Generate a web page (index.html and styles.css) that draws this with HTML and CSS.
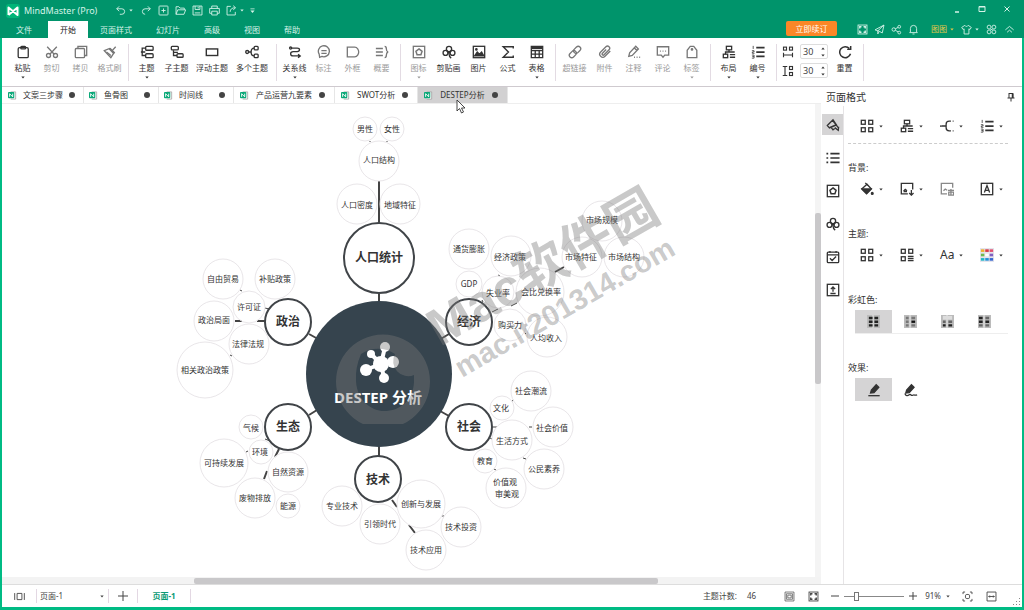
FILE: index.html
```
<!DOCTYPE html>
<html lang="zh-CN">
<head>
<meta charset="utf-8">
<title>MindMaster (Pro)</title>
<link rel="stylesheet" href="styles.css">
</head>
<body>
<svg class="sprite" aria-hidden="true">
  <symbol id="caret" viewBox="0 0 6 4"><path d="M.5 .5h5L3 3.5z" fill="currentColor"/></symbol>
  <symbol id="logo" viewBox="0 0 14 14"><rect width="14" height="14" rx="3" fill="#00b578"/><path d="M2.500 11V3.500l9 7.500V3.500L2.500 11" fill="none" stroke="#fff" stroke-width="2" stroke-linejoin="round"/></symbol>
  <symbol id="doc" viewBox="0 0 10 10"><path d="M3 1h5.500v8H3" fill="#fff" stroke="#999" stroke-width=".8"/><rect y="1" width="7" height="7" rx="1" fill="#0aa878"/><path d="M1.800 6.500V3l3.400 3.500V3" fill="none" stroke="#fff" stroke-width="1"/></symbol>
  <symbol id="undo" viewBox="0 0 16 16"><path d="M6 2L2.500 5.500 6 9M2.500 5.500h7.500a4 4 0 0 1 0 8H7"/></symbol>
  <symbol id="redo" viewBox="0 0 16 16"><path d="M10 2l3.500 3.500L10 9M13.500 5.500H6a4 4 0 0 0 0 8"/></symbol>
  <symbol id="new" viewBox="0 0 16 16"><rect x="1.500" y="1.500" width="13" height="13" rx="1"/><path d="M8 5v6M5 8h6"/></symbol>
  <symbol id="open" viewBox="0 0 16 16"><path d="M1.500 13.500v-11h4l2 2h6v2.500M1.500 13.500L4 7h11.500l-2.500 6.500z"/></symbol>
  <symbol id="save" viewBox="0 0 16 16"><path d="M1.500 1.500h13v13h-13zM4.500 1.500v5h7v-5M9 3v2M4 11.500h8"/></symbol>
  <symbol id="print" viewBox="0 0 16 16"><path d="M4 5V1.500h8V5M4 12H1V5h14v7h-3M4 9h8v5.500H4z"/></symbol>
  <symbol id="export" viewBox="0 0 16 16"><path d="M7 2H1.500v12.500h12V10M6 10c0-4 3-6 7-6M10.500 1l3.500 3-3.500 3"/></symbol>
  <symbol id="more" viewBox="0 0 6 7"><path d="M.5 .5h5v1h-5zM.5 3h5L3 6z" fill="currentColor"/></symbol>
  <symbol id="min" viewBox="0 0 10 10"><path d="M3 8h4" stroke-width="1.500"/></symbol>
  <symbol id="max" viewBox="0 0 10 10"><path d="M2 2.500h6v5H2zM2 3h6"/></symbol>
  <symbol id="close" viewBox="0 0 10 10"><path d="M2.500 2.500l5 5M7.500 2.500l-5 5"/></symbol>
  <symbol id="grid4" viewBox="0 0 16 16"><rect x="1.500" y="1.500" width="13" height="13"/><path d="M4 6.500V4h2.500M9.500 4H12v2.500M4 9.500V12h2.500M9.500 12H12V9.500" stroke-width="2"/></symbol>
  <symbol id="plane" viewBox="0 0 16 16"><path d="M1.500 8.500L14.500 1.500 12 13 7.500 10.500zM14.500 1.500L5.500 10v4.500L7.500 11"/></symbol>
  <symbol id="share" viewBox="0 0 16 16"><circle cx="4" cy="8" r="2.500"/><circle cx="12" cy="4" r="2"/><circle cx="12" cy="12.500" r="2"/><path d="M6.200 7l4-2M6.200 9l4 2.500"/></symbol>
  <symbol id="bell" viewBox="0 0 16 16"><path d="M2 12.500h12M3.500 12V6.500a4.500 4.500 0 0 1 9 0V12M6.500 14.500h3"/></symbol>
  <symbol id="shirt" viewBox="0 0 16 16"><path d="M5.500 2L1 5l2 3 1.500-1v7.500h7V7L13 8l2-3-4.500-3c-1 2-4 2-5 0z"/></symbol>
  <symbol id="clover4" viewBox="0 0 16 16"><circle cx="4.500" cy="4.500" r="2.800"/><circle cx="11.500" cy="4.500" r="2.800"/><circle cx="4.500" cy="11.500" r="2.800"/><circle cx="11.500" cy="11.500" r="2.800"/><path d="M6.500 8h3"/></symbol>
  <symbol id="up" viewBox="0 0 16 16"><path d="M2 8.500l6-5 6 5M4.500 12L8 9l3.500 3"/></symbol>

  <symbol id="paste" viewBox="0 0 16 16"><rect x="2.500" y="3" width="11.500" height="11.500" rx="1.500"/><rect x="5.500" y="1.500" width="5.500" height="3" rx="1"/></symbol>
  <symbol id="cut" viewBox="0 0 16 16"><circle cx="4" cy="12" r="2.300"/><circle cx="12" cy="12" r="2.300"/><path d="M2.500 2l8 8.500M13.500 2l-8 8.500"/></symbol>
  <symbol id="copy" viewBox="0 0 16 16"><rect x="1.500" y="4" width="10.500" height="10.500" rx="1"/><path d="M4.500 4V1.500h10v10.500H12"/></symbol>
  <symbol id="brush" viewBox="0 0 16 16"><path d="M1.500 6.500L7.500 4l5 5L9 14.500z"/><path d="M4 8l5 4M10.500 6.500L14.500 2"/><path d="M7.500 4l5.500 5.500" stroke-width="2.800"/></symbol>
  <symbol id="topic" viewBox="0 0 16 16"><rect x="6.500" y="1.500" width="8.500" height="4.500" rx="1"/><rect x="6.500" y="10" width="8.500" height="4.500" rx="1"/><path d="M6.500 3.500H2.500v8.500h4M1 8h5"/></symbol>
  <symbol id="subtopic" viewBox="0 0 16 16"><rect x="1.500" y="1.500" width="8" height="4" rx="1"/><rect x="8" y="10" width="7" height="4" rx="1"/><path d="M4 6v6h4M4 8.500h5"/></symbol>
  <symbol id="floating" viewBox="0 0 16 16"><rect x="1.500" y="4.500" width="13" height="7.500" stroke-width="1.600"/></symbol>
  <symbol id="multi" viewBox="0 0 16 16"><rect x="10.500" y="1.500" width="4.500" height="4" rx="1"/><rect x="10.500" y="10.500" width="4.500" height="4" rx="1"/><circle cx="2.500" cy="8" r="1.700"/><path d="M4 8h3M10.500 3.500C8 3.500 7 5 7 8s1 4.500 3.500 4.500"/></symbol>
  <symbol id="relation" viewBox="0 0 16 16"><path d="M4 3.500h6.500c3.500 0 3.500 4 0 4H6c-4 0-4 5 0 5h7M11.500 10.500l2.500 2-2.500 2"/><circle cx="3" cy="3.500" r="1.200"/></symbol>
  <symbol id="callout" viewBox="0 0 16 16"><path d="M3 14l-.5-3.500a6.300 6.300 0 1 1 3 2.500zM5 6.500h6M5 9.500h6"/></symbol>
  <symbol id="frame" viewBox="0 0 16 16"><path d="M1.500 2.500h8.500c3 0 4.500 3.500 4.500 5.500s-1.500 5.500-4.500 5.500H1.500z"/></symbol>
  <symbol id="summary" viewBox="0 0 16 16"><path d="M1 4h8M1 8h8M1 12h8M11 1.500c2 0 2 1 2 3s0 3 2 3.500c-2 .5-2 1.500-2 3.500s0 3-2 3"/></symbol>
  <symbol id="mark" viewBox="0 0 16 16"><rect x="1.500" y="1.500" width="13" height="13"/><path d="M8 4.500l3.500 2.700-1.300 4H5.800l-1.300-4z" stroke-width="1.700"/></symbol>
  <symbol id="clip" viewBox="0 0 16 16"><circle cx="8" cy="4.500" r="3"/><circle cx="4" cy="9" r="2.800"/><circle cx="12" cy="9" r="2.800"/><path d="M8 7v3c0 2 1 4 2.500 5M6 7l2 2.500L10 7"/></symbol>
  <symbol id="image" viewBox="0 0 16 16"><rect x="1.500" y="1.500" width="13" height="13"/><path d="M3 12.500L6 8l2.500 2.500L11 8l2.500 4.500z" fill="currentColor"/><circle cx="5" cy="5" r=".8"/></symbol>
  <symbol id="sigma" viewBox="0 0 16 16"><path d="M14 4V2H2.500l6 6-6 6H14v-2" stroke-width="1.600"/></symbol>
  <symbol id="table" viewBox="0 0 16 16"><path d="M1.500 1.500h13v13h-13zM1.500 6.500h13M1.500 10.500h13M6 6v8.500M10.500 6v8.500"/><path d="M2 3.500h12" stroke-width="2.500"/></symbol>
  <symbol id="link" viewBox="0 0 16 16"><g transform="rotate(-45 8 8)"><rect x="0" y="5.200" width="9" height="5.600" rx="2.800"/><rect x="7" y="5.200" width="9" height="5.600" rx="2.800"/></g></symbol>
  <symbol id="attach" viewBox="0 0 16 16"><g transform="rotate(45 8 8)"><path d="M11.500 3v8.500a3.500 3.500 0 0 1-7 0V3a2.500 2.500 0 0 1 5 0v8a1.300 1.300 0 0 1-2.600 0V5"/></g></symbol>
  <symbol id="note" viewBox="0 0 16 16"><path d="M2 13l1-4 7-7.500 3 3L6 12zM8.500 3.500l3 3M8 14h1M11 14h1M14 14h1"/></symbol>
  <symbol id="comment" viewBox="0 0 16 16"><path d="M1.500 2h13v9.500H10L8 14l-2-2.500H1.500zM4.500 7h1M7.500 7h1M10.500 7h1"/></symbol>
  <symbol id="tag" viewBox="0 0 16 16"><path d="M2.500 14.500V6L6 1.500h4L13.500 6v8.500z"/><circle cx="8" cy="5" r=".8"/></symbol>
  <symbol id="layout" viewBox="0 0 16 16"><rect x="5" y="1.500" width="6" height="4"/><rect x="1.500" y="10.500" width="5" height="4"/><path d="M8 5.500V8M4 10.500V8h10.500M9 11h6M9 14h6"/></symbol>
  <symbol id="number" viewBox="0 0 16 16"><path d="M6 3h9.500M6 8h9.500M6 13h9.500" stroke-width="2"/><path d="M2.500 1v3.500M1 6.500h2.500v1.500H1.500v1.500h2.500M1 11.500h2.500v3.500H1M1.500 13.200h2" stroke-width=".9"/></symbol>
  <symbol id="hgap" viewBox="0 0 16 16"><rect x="2" y="1.500" width="4" height="4"/><rect x="10" y="1.500" width="4" height="4"/><path d="M2 9v6M14 9v6M2 12h12"/></symbol>
  <symbol id="vgap" viewBox="0 0 16 16"><rect x="10" y="2" width="4" height="4"/><rect x="10" y="10" width="4" height="4"/><path d="M1 2h6M1 14h6M4 2v12"/></symbol>
  <symbol id="reset" viewBox="0 0 16 16"><path d="M13 4a6.300 6.300 0 1 0 1.300 6M14.500 1v4h-4" stroke-width="1.700"/></symbol>

  <symbol id="pin" viewBox="0 0 10 10"><path d="M3 1v5M3 1.500h4v4.500M1.500 6h7M5 6v3.500" stroke-width="1"/><path d="M6.500 1v5" stroke-width="1.500"/></symbol>
  <symbol id="style" viewBox="0 0 16 16"><path d="M1.500 8.500L8 2l4 6-8 3.500zM4 11l8-3.500M7 2l7 9M10 11l4 3 .5-4"/><path d="M6 11l2 2.500L10 12"/></symbol>
  <symbol id="list" viewBox="0 0 16 16"><path d="M5 3h10.500M5 8h10.500M5 13h10.500M.5 3h2M.5 8h2M.5 13h2" stroke-width="1.900"/></symbol>
  <symbol id="task" viewBox="0 0 16 16"><rect x="1.500" y="2.500" width="13" height="12" rx="1"/><path d="M1.500 5.500h13M4.500 1v2M11.500 1v2M4.500 9.500l2.500 2.500 4.500-4.500"/></symbol>
  <symbol id="upload" viewBox="0 0 16 16"><rect x="1.500" y="1.500" width="13" height="13"/><path d="M8 10V5M5.500 7L8 4.500 10.500 7M5 12h6" stroke-width="1.500"/></symbol>
  <symbol id="four" viewBox="0 0 16 16"><rect x="1.500" y="1.500" width="4.500" height="4.500"/><rect x="10" y="1.500" width="4.500" height="4.500"/><rect x="1.500" y="10" width="4.500" height="4.500"/><rect x="10" y="10" width="4.500" height="4.500"/></symbol>
  <symbol id="fourlist" viewBox="0 0 16 16"><rect x="1.500" y="1.500" width="4.500" height="4.500"/><rect x="10" y="1.500" width="4.500" height="4.500"/><rect x="1.500" y="10" width="4.500" height="4.500"/><path d="M9 9.500h6.500M9 12h6.500M9 14.500h6.500"/></symbol>
  <symbol id="branch" viewBox="0 0 16 16"><path d="M2 8h5M12.500 2.500h-2C8 2.500 7 3.500 7 6v4c0 2.500 1 3.500 3.500 3.500h2M1 7v2M14.500 13.500h1M14.500 2.500h1"/></symbol>
  <symbol id="bucket" viewBox="0 0 16 16"><path d="M2 8l6-5.500L13 8l-5.500 5.500zM6 1l3 3"/><path d="M2.500 8h10L7.500 13z" fill="currentColor"/><circle cx="14" cy="13" r="1" fill="currentColor"/></symbol>
  <symbol id="bgimg" viewBox="0 0 16 16"><path d="M9 13.500H1.500v-12h13v7M4 10.500l2-2 2 1.500M4 11h4M13 9v6M10.500 12.500l2.500 2.500 2.500-2.500"/></symbol>
  <symbol id="bgdel" viewBox="0 0 16 16"><path d="M8 13.500H1.500v-12h13v5M4 10l2-2 2 1.500M9 9.500h7M10 11.500h5.500v3.500H10zM12.500 8v7"/></symbol>
  <symbol id="wmark" viewBox="0 0 16 16"><rect x="1.500" y="1.500" width="13" height="13"/><path d="M5 12l3-8 3 8M6 9.500h4"/></symbol>
  <symbol id="swatches" viewBox="0 0 16 16"><path d="M0 0h16v16H0z" fill="#e4e4ec" stroke="none"/><g stroke="none"><path d="M1 1.500h4v3H1z" fill="#f0b030"/><path d="M6 1.500h4v3H6z" fill="#d83848"/><path d="M11 1.500h4v3h-4z" fill="#e05070"/><path d="M1 6.500h4v3H1z" fill="#70b850"/><path d="M6 6.500h4v3H6z" fill="#fff"/><path d="M11 6.500h4v3h-4z" fill="#8060c0"/><path d="M1 11.500h4v3H1z" fill="#20b8c8"/><path d="M6 11.500h4v3H6z" fill="#2090d8"/><path d="M11 11.500h4v3h-4z" fill="#3868d0"/></g></symbol>
  <symbol id="pen" viewBox="0 0 16 16"><path d="M4 11.500L5 8l5.500-6 3 3L8 11z" fill="currentColor"/><path d="M1.500 14.500h13"/></symbol>
  <symbol id="penwave" viewBox="0 0 16 16"><path d="M2 11.500L3 8l5.500-6 3 3L6 11z" fill="currentColor"/><path d="M1 12c1 3 3 3 5 1.500s2 1.500 4 .5 2 .5 5-.5"/></symbol>

  <symbol id="rb" viewBox="0 0 14 14"><path d="M0 0h14v14H0z" fill="#bbb"/><path d="M6.500 0v14" stroke="#eee" stroke-width="1"/></symbol>
  <symbol id="outline" viewBox="0 0 16 16"><path d="M1 3v10M15 3v10M4.500 3.500h7v9h-7z"/></symbol>
  <symbol id="fit" viewBox="0 0 16 16"><path d="M1.500 1.500h13v13h-13zM5.500 6h5v4h-5zM3.500 4h9v8h-9z" stroke-width="1"/></symbol>
  <symbol id="focus" viewBox="0 0 16 16"><path d="M1.500 4.500v-3h3M11.500 1.500h3v3M1.500 11.500v3h3M11.500 14.500h3v-3"/><rect x="5" y="5" width="6" height="6" rx="2"/></symbol>
  <symbol id="fitw" viewBox="0 0 16 16"><path d="M1.500 1.500h13v13h-13zM4 8h8M5.500 6.500L4 8l1.500 1.500M10.500 6.500L12 8l-1.500 1.500"/></symbol>
</svg>

<div class="app">
  <header class="header">
    <div class="titlebar">
      <svg class="logo"><use href="#logo"/></svg>
      <span class="app-name">MindMaster (Pro)</span>
      <div class="quick">
        <button aria-label="撤销"><svg class="icon"><use href="#undo"/></svg><svg class="caret"><use href="#caret"/></svg></button>
        <button aria-label="重做"><svg class="icon"><use href="#redo"/></svg></button>
        <button aria-label="新建"><svg class="icon"><use href="#new"/></svg></button>
        <button aria-label="打开"><svg class="icon"><use href="#open"/></svg></button>
        <button aria-label="保存"><svg class="icon"><use href="#save"/></svg></button>
        <button aria-label="打印"><svg class="icon"><use href="#print"/></svg></button>
        <button aria-label="导出"><svg class="icon"><use href="#export"/></svg><svg class="caret"><use href="#caret"/></svg></button>
        <button aria-label="自定义"><svg class="more"><use href="#more"/></svg></button>
      </div>
      <div class="window-controls">
        <button aria-label="最小化"><svg class="wicon"><use href="#min"/></svg></button>
        <button aria-label="最大化"><svg class="wicon"><use href="#max"/></svg></button>
        <button aria-label="关闭"><svg class="wicon"><use href="#close"/></svg></button>
      </div>
    </div>
    <div class="menubar">
      <nav class="menu">
        <button class="menu-file">文件</button><button class="active">开始</button><button>页面样式</button><button>幻灯片</button><button>高级</button><button>视图</button><button>帮助</button>
      </nav>
      <button class="renew">立即续订</button>
      <div class="account">
        <button aria-label="应用"><svg class="icon"><use href="#grid4"/></svg></button>
        <button aria-label="发送"><svg class="icon"><use href="#plane"/></svg></button>
        <button aria-label="分享"><svg class="icon"><use href="#share"/></svg></button>
        <button aria-label="通知"><svg class="icon"><use href="#bell"/></svg></button>
      </div>
      <div class="user">
        <button class="user-name">图图<svg class="caret"><use href="#caret"/></svg></button>
        <button aria-label="主题"><svg class="icon"><use href="#shirt"/></svg><svg class="caret"><use href="#caret"/></svg></button>
        <button aria-label="社区"><svg class="icon"><use href="#clover4"/></svg></button>
        <button aria-label="折叠"><svg class="icon"><use href="#up"/></svg></button>
      </div>
    </div>
  </header>

  <div class="ribbon">
    <div class="group">
      <button class="tool"><svg class="ticon"><use href="#paste"/></svg>粘贴<svg class="caret"><use href="#caret"/></svg></button>
      <button class="tool off"><svg class="ticon"><use href="#cut"/></svg>剪切</button>
      <button class="tool off"><svg class="ticon"><use href="#copy"/></svg>拷贝</button>
      <button class="tool off"><svg class="ticon"><use href="#brush"/></svg>格式刷</button>
    </div>
    <div class="group">
      <button class="tool"><svg class="ticon"><use href="#topic"/></svg>主题<svg class="caret"><use href="#caret"/></svg></button>
      <button class="tool mid"><svg class="ticon"><use href="#subtopic"/></svg>子主题</button>
      <button class="tool wide"><svg class="ticon"><use href="#floating"/></svg>浮动主题</button>
      <button class="tool wide"><svg class="ticon"><use href="#multi"/></svg>多个主题</button>
    </div>
    <div class="group">
      <button class="tool"><svg class="ticon"><use href="#relation"/></svg>关系线<svg class="caret"><use href="#caret"/></svg></button>
      <button class="tool off"><svg class="ticon"><use href="#callout"/></svg>标注</button>
      <button class="tool off"><svg class="ticon"><use href="#frame"/></svg>外框</button>
      <button class="tool off"><svg class="ticon"><use href="#summary"/></svg>概要</button>
    </div>
    <div class="group">
      <button class="tool off"><svg class="ticon"><use href="#mark"/></svg>图标<svg class="caret"><use href="#caret"/></svg></button>
      <button class="tool mid"><svg class="ticon"><use href="#clip"/></svg>剪贴画</button>
      <button class="tool"><svg class="ticon"><use href="#image"/></svg>图片</button>
      <button class="tool"><svg class="ticon"><use href="#sigma"/></svg>公式</button>
      <button class="tool"><svg class="ticon"><use href="#table"/></svg>表格<svg class="caret"><use href="#caret"/></svg></button>
    </div>
    <div class="group">
      <button class="tool mid off"><svg class="ticon"><use href="#link"/></svg>超链接</button>
      <button class="tool off"><svg class="ticon"><use href="#attach"/></svg>附件</button>
      <button class="tool off"><svg class="ticon"><use href="#note"/></svg>注释</button>
      <button class="tool off"><svg class="ticon"><use href="#comment"/></svg>评论</button>
      <button class="tool off"><svg class="ticon"><use href="#tag"/></svg>标签<svg class="caret"><use href="#caret"/></svg></button>
    </div>
    <div class="group">
      <button class="tool"><svg class="ticon"><use href="#layout"/></svg>布局<svg class="caret"><use href="#caret"/></svg></button>
      <button class="tool"><svg class="ticon"><use href="#number"/></svg>编号<svg class="caret"><use href="#caret"/></svg></button>
    </div>
    <div class="group">
      <div class="spacing">
        <label class="spin"><svg class="sicon"><use href="#hgap"/></svg><span class="spin-box"><input type="text" value="30" aria-label="水平间距"><span class="steps"><svg class="caret flip"><use href="#caret"/></svg><svg class="caret"><use href="#caret"/></svg></span></span></label>
        <label class="spin"><svg class="sicon"><use href="#vgap"/></svg><span class="spin-box"><input type="text" value="30" aria-label="垂直间距"><span class="steps"><svg class="caret flip"><use href="#caret"/></svg><svg class="caret"><use href="#caret"/></svg></span></span></label>
      </div>
      <button class="tool"><svg class="ticon"><use href="#reset"/></svg>重置</button>
    </div>
  </div>

  <div class="body">
    <main class="work">
      <div class="tabs">
        <button class="tab"><svg class="docicon"><use href="#doc"/></svg>文案三步骤<i class="dot"></i></button>
        <button class="tab"><svg class="docicon"><use href="#doc"/></svg>鱼骨图<i class="dot"></i></button>
        <button class="tab"><svg class="docicon"><use href="#doc"/></svg>时间线<i class="dot"></i></button>
        <button class="tab roomy"><svg class="docicon"><use href="#doc"/></svg>产品运营九要素<i class="dot"></i></button>
        <button class="tab roomy"><svg class="docicon"><use href="#doc"/></svg>SWOT分析<i class="dot"></i></button>
        <button class="tab roomy current"><svg class="docicon"><use href="#doc"/></svg>DESTEP分析<i class="dot"></i></button>
      </div>
      <div class="canvas-row">
        <svg class="canvas" role="img" aria-label="DESTEP 分析">
          <g transform="translate(-2 -104)">
            <g class="edges">
              <path d="M379 181v42M379 293v10M379 446v10M309 334l9 5M449 334l-10 6M309 415l8-5M440 411l9 5M235 321h7M257 321h8M279 449l-4 8M267 471l-3 8M392 500l5 7M409 525l6 8M555 272l9-5"/>
              <path class="thin" d="M269 309l-4-1M240 290l2 1M230 355l2 1M265 439l5 2M246 452l2-1M511 306l6-3M492 312l6-3M483 302l-1-2M493 427h4M529 427h3M490 438l2 1M512 401l2-1M523 458l3 1M494 469l2 1M443 515v2M370 141v1M387 141v1M525 333l1 1M498 275l2 1"/>
            </g>
            <g class="leaf-rings">
              <circle cx="365" cy="129" r="12"/><circle cx="392" cy="129" r="12"/><circle cx="379" cy="161" r="20"/><circle cx="357" cy="204" r="20"/><circle cx="400" cy="204" r="20"/>
              <circle cx="223" cy="279" r="20"/><circle cx="275" cy="279" r="20"/><circle cx="249" cy="307" r="16"/><circle cx="214" cy="321" r="20"/><circle cx="249" cy="344" r="20"/><circle cx="205" cy="370" r="28"/>
              <circle cx="251" cy="427" r="12"/><circle cx="261" cy="452" r="12"/><circle cx="224" cy="463" r="24"/><circle cx="288" cy="472" r="20"/><circle cx="255" cy="498" r="20"/><circle cx="288" cy="506" r="12"/>
              <circle cx="342" cy="506" r="20"/><circle cx="380" cy="524" r="20"/><circle cx="421" cy="504" r="24"/><circle cx="461" cy="527" r="20"/><circle cx="426" cy="550" r="20"/>
              <circle cx="531" cy="391" r="20"/><circle cx="502" cy="408" r="12"/><circle cx="553" cy="427" r="20"/><circle cx="512" cy="440" r="20"/><circle cx="485" cy="461" r="12"/><circle cx="544" cy="469" r="20"/><circle cx="506" cy="488" r="20"/>
              <circle cx="469" cy="249" r="20"/><circle cx="511" cy="256" r="20"/><circle cx="469" cy="284" r="13"/><circle cx="498" cy="292" r="16"/><circle cx="540" cy="292" r="24"/><circle cx="510" cy="325" r="16"/><circle cx="547" cy="337" r="20"/><circle cx="602" cy="221" r="20"/><circle cx="582" cy="257" r="20"/><circle cx="624" cy="257" r="20"/>
            </g>
            <circle class="core" cx="379" cy="374" r="73"/>
            <g class="main-rings">
              <circle cx="379" cy="258" r="35"/><circle cx="288" cy="322" r="23"/><circle cx="469" cy="322" r="23"/><circle cx="288" cy="427" r="23"/><circle cx="469" cy="427" r="23"/><circle cx="378" cy="479" r="23"/>
            </g>
            <g class="molecule">
              <path d="M365 370l16-6M381 364l12-2M381 364l3 14M381 364l4-17M381 364l-10-10"/>
              <circle cx="381" cy="364" r="8"/><circle cx="366" cy="370" r="6"/><circle cx="393" cy="362" r="6"/><circle cx="384" cy="378" r="5"/><circle cx="385" cy="347" r="5"/><circle cx="371" cy="354" r="4"/>
            </g>
            <text class="core-text" x="378" y="403">DESTEP 分析</text>
            <g class="main-text">
              <text x="379" y="262">人口统计</text><text x="288" y="326">政治</text><text x="469" y="326">经济</text><text x="288" y="431">生态</text><text x="469" y="431">社会</text><text x="378" y="484">技术</text>
            </g>
            <g class="leaf-text">
              <text x="365" y="132">男性</text><text x="392" y="132">女性</text><text x="379" y="163">人口结构</text><text x="357" y="208">人口密度</text><text x="400" y="208">地域特征</text>
              <text x="223" y="282">自由贸易</text><text x="275" y="282">补贴政策</text><text x="249" y="310">许可证</text><text x="214" y="323">政治局面</text><text x="248" y="347">法律法规</text><text x="205" y="373">相关政治政策</text>
              <text x="251" y="431">气候</text><text x="260" y="455">环境</text><text x="224" y="466">可持续发展</text><text x="288" y="475">自然资源</text><text x="255" y="501">废物排放</text><text x="288" y="509">能源</text>
              <text x="342" y="509">专业技术</text><text x="380" y="527">引领时代</text><text x="421" y="507">创新与发展</text><text x="461" y="530">技术投资</text><text x="426" y="553">技术应用</text>
              <text x="531" y="394">社会潮流</text><text x="501" y="411">文化</text><text x="552" y="431">社会价值</text><text x="512" y="444">生活方式</text><text x="485" y="464">教育</text><text x="544" y="472">公民素养</text><text x="505" y="485">价值观</text><text x="507" y="497">审美观</text>
              <text x="469" y="252">通货膨胀</text><text x="510" y="260">经济政策</text><text x="469" y="287">GDP</text><text x="498" y="296">失业率</text><text x="541" y="295">会比兑换率</text><text x="510" y="328">购买力</text><text x="546" y="341">人均收入</text><text x="602" y="223">市场规模</text><text x="581" y="260">市场特征</text><text x="624" y="260">市场结构</text>
            </g>
            <g class="watermark">
              <path fill-rule="evenodd" d="M363 424a47 47 0 1 1 40 0zM361 354q-6 14-5 27c1 20 16 30 28 30 16 0 29-10 30-29v-7a15 15 0 0 1-19-21 30 30 0 0 0-34 0z"/>
              <g transform="translate(440 347) rotate(-30)"><text class="wm-large">Mac软件园</text></g>
              <g transform="translate(462 378) rotate(-30)"><text class="wm-small">mac.it201314.com</text></g>
            </g>
          </g>
        </svg>
        <div class="vscroll"><div class="vthumb"></div></div>
      </div>
      <div class="hscroll"><div class="hthumb"></div></div>
      <svg class="pointer" viewBox="0 0 10 15"><path d="M1 1v11l2.500-2.500L5.500 14l2-1-2-4H9z" fill="#fff" stroke="#333" stroke-width=".9"/></svg>
    </main>

    <aside class="panel">
      <div class="panel-head"><h2>页面格式</h2><button aria-label="固定"><svg class="wicon"><use href="#pin"/></svg></button></div>
      <div class="panel-body">
        <div class="rail">
          <button class="active" aria-label="样式"><svg class="picon"><use href="#style"/></svg></button>
          <button aria-label="大纲"><svg class="picon"><use href="#list"/></svg></button>
          <button aria-label="图标"><svg class="picon"><use href="#mark"/></svg></button>
          <button aria-label="剪贴画"><svg class="picon"><use href="#clip"/></svg></button>
          <button aria-label="任务"><svg class="picon"><use href="#task"/></svg></button>
          <button aria-label="上传"><svg class="picon"><use href="#upload"/></svg></button>
        </div>
        <div class="props">
          <div class="options first">
            <button aria-label="布局"><svg class="picon"><use href="#four"/></svg><svg class="caret"><use href="#caret"/></svg></button>
            <button aria-label="结构"><svg class="picon"><use href="#layout"/></svg><svg class="caret"><use href="#caret"/></svg></button>
            <button aria-label="连线"><svg class="picon"><use href="#branch"/></svg><svg class="caret"><use href="#caret"/></svg></button>
            <button aria-label="编号"><svg class="picon"><use href="#number"/></svg><svg class="caret"><use href="#caret"/></svg></button>
          </div>
          <section>
            <h3>背景:</h3>
            <div class="options">
              <button aria-label="填充"><svg class="picon"><use href="#bucket"/></svg><svg class="caret"><use href="#caret"/></svg></button>
              <button aria-label="插入背景"><svg class="picon"><use href="#bgimg"/></svg><svg class="caret"><use href="#caret"/></svg></button>
              <button aria-label="移除背景" class="dim"><svg class="picon"><use href="#bgdel"/></svg></button>
              <button aria-label="水印"><svg class="picon"><use href="#wmark"/></svg><svg class="caret"><use href="#caret"/></svg></button>
            </div>
          </section>
          <section>
            <h3>主题:</h3>
            <div class="options">
              <button aria-label="主题"><svg class="picon"><use href="#four"/></svg><svg class="caret"><use href="#caret"/></svg></button>
              <button aria-label="主题列表"><svg class="picon"><use href="#fourlist"/></svg><svg class="caret"><use href="#caret"/></svg></button>
              <button class="font-btn">Aa<svg class="caret"><use href="#caret"/></svg></button>
              <button aria-label="配色"><svg class="picon"><use href="#swatches"/></svg><svg class="caret"><use href="#caret"/></svg></button>
            </div>
          </section>
          <section>
            <h3>彩虹色:</h3>
            <div class="choices ruled">
              <button class="active" aria-label="彩虹色一"><svg class="rainbow" viewBox="0 0 14 14"><use href="#rb"/><path d="M2 2h4v2.500H2zM8 2h4v2.500H8zM2 6h4v2.500H2zM8 6h4v2.500H8zM2 10h4v2.500H2zM8 10h4v2.500H8z" fill="#222"/></svg></button>
              <button aria-label="彩虹色二"><svg class="rainbow" viewBox="0 0 14 14"><use href="#rb"/><path d="M2 2h3v2.500H2zM8 2h4v2.500H8zM2 6h3v2.500H2zM2 10h3v2.500H2zM8 10h4v2.500H8z" fill="#777"/><path d="M8 6h4v2.500H8z" fill="#111"/></svg></button>
              <button aria-label="彩虹色三"><svg class="rainbow" viewBox="0 0 14 14"><use href="#rb"/><path d="M2 1h10v4H2z" fill="#ddd"/><path d="M2 6h3v2.500H2zM8 6h4v2.500H8z" fill="#666"/><path d="M2 10h3v2.500H2zM8 10h4v2.500H8z" fill="#222"/></svg></button>
              <button aria-label="彩虹色四"><svg class="rainbow" viewBox="0 0 14 14"><use href="#rb"/><path d="M1 2h4v2.500H1zM8 6h4v2.500H8zM1 6h4v2.500H1z" fill="#222"/><path d="M8 2h4v2.500H8zM1 10h4v2.500H1zM8 10h4v2.500H8z" fill="#666"/></svg></button>
            </div>
          </section>
          <section>
            <h3>效果:</h3>
            <div class="choices">
              <button class="active" aria-label="直线"><svg class="picon"><use href="#pen"/></svg></button>
              <button aria-label="手绘"><svg class="picon"><use href="#penwave"/></svg></button>
            </div>
          </section>
        </div>
      </div>
    </aside>
  </div>

  <footer class="status">
    <button class="outline-btn" aria-label="页面列表"><svg class="icon"><use href="#outline"/></svg></button>
    <label class="page-select"><select aria-label="页面"><option>页面-1</option></select><svg class="caret"><use href="#caret"/></svg></label>
    <button class="add" aria-label="添加页面"><svg class="wicon" viewBox="0 0 10 10"><path d="M5 0v10M0 5h10"/></svg></button>
    <button class="page-tab">页面-1</button>
    <span class="count">主题计数:<b>46</b></span>
    <div class="view-btns">
      <button aria-label="适应"><svg class="icon"><use href="#fit"/></svg></button>
      <button aria-label="全屏"><svg class="icon"><use href="#grid4"/></svg></button>
    </div>
    <div class="zoom">
      <button aria-label="缩小"><svg class="zicon" viewBox="0 0 8 8"><path d="M0 4h8"/></svg></button>
      <input type="range" min="0" max="100" value="18" aria-label="缩放">
      <button aria-label="放大"><svg class="zicon" viewBox="0 0 8 8"><path d="M0 4h8M4 0v8"/></svg></button>
    </div>
    <button class="percent">91%<svg class="caret"><use href="#caret"/></svg></button>
    <div class="view-btns">
      <button aria-label="聚焦"><svg class="icon"><use href="#focus"/></svg></button>
      <button aria-label="适应宽度"><svg class="icon"><use href="#fitw"/></svg></button>
    </div>
    <svg class="grip" viewBox="0 0 8 8"><path d="M6 0h1v1H6zM3 3h1v1H3zM6 3h1v1H6zM0 6h1v1H0zM3 6h1v1H3zM6 6h1v1H6z"/></svg>
  </footer>
</div>
</body>
</html>
```
FILE: styles.css
```
* { box-sizing: border-box; }
html, body { height: 100%; margin: 0; }
body {
  font: 8px/12px "Noto Sans", "Noto Sans CJK SC", sans-serif;
  color: #333;
}
button {
  display: flex; align-items: center; justify-content: center;
  margin: 0; padding: 0; border: 0; background: none;
  font: inherit; color: inherit; white-space: nowrap;
}
svg { display: block; flex: none; fill: none; stroke: currentColor; stroke-width: 1.3; }
h2, h3 { margin: 0; font-weight: 400; }
.sprite { position: absolute; width: 0; height: 0; }
.icon { width: 11px; height: 11px; }
.wicon { width: 10px; height: 10px; stroke-width: 1; }
.caret { width: 4px; height: 3px; stroke: none; }

.app {
  height: 100vh; display: flex; flex-direction: column;
  background: #fff; border: solid #00bb84; border-width: 0 2px 3px;
}

.header { background: #00946b; color: #d5f3e8; margin: 0 -2px; padding: 0 2px; }
.titlebar { display: flex; align-items: center; height: 21px; padding-left: 4px; }
.logo { width: 14px; height: 14px; stroke: none; }
.app-name { margin-left: 4px; font-size: 9px; }
.quick { display: flex; align-items: center; gap: 6px; margin-left: 18px; }
.quick button { gap: 3px; }
.quick button:first-child { margin-right: 2px; }
.more { width: 5px; height: 6px; stroke: none; }
.window-controls { display: flex; gap: 15px; margin-left: auto; padding: 0 10px 4px 0; }

.menubar { display: flex; align-items: stretch; height: 17px; }
.menu { display: flex; padding-left: 2px; }
.menu button { padding: 0 12px; }
.menu .menu-file { margin-right: 4px; }
.menu .active { background: #fff; color: #222; }
.renew {
  width: 51px; height: 15px; margin-left: auto; border-radius: 2px;
  background: #fb8727; color: #fff;
}
.account { display: flex; gap: 6px; margin-left: 20px; padding-bottom: 1px; }
.user { display: flex; gap: 7px; margin-left: 12px; padding: 0 7px 1px 0; }
.user button { gap: 3px; }
.user-name { color: #e3c84a; }

.ribbon { display: flex; padding: 6px 0 5px 3px; border-bottom: 1px solid #cfcacf; overflow: hidden; }
.group { display: flex; padding: 0 4px 0 3px; height: 37px; border-right: 1px solid #e3dbe3; }
.tool { width: 29px; height: 36px; flex-direction: column; justify-content: flex-start; padding-top: 1px; color: #333; flex: none; }
.tool .ticon { margin-bottom: 3px; }
.ticon { width: 14px; height: 14px; stroke-width: 1.5; }
.tool .caret { margin-top: 2px; }
.mid { width: 31px; }
.wide { width: 40px; }
.off { color: #999; }
.off .ticon { color: #777; }
.spacing { display: flex; flex-direction: column; gap: 4px; padding: 0 2px; }
.spin { display: flex; align-items: center; gap: 6px; }
.sicon { width: 12px; height: 12px; stroke-width: 1.5; }
.spin-box { display: flex; align-items: center; width: 28px; height: 15px; padding: 0 2px; border: 1px solid #ddd; border-radius: 2px; }
.spin-box input { width: 16px; min-width: 0; padding: 0; border: 0; background: none; font: inherit; font-size: 9px; color: #444; }
.steps { display: flex; flex-direction: column; gap: 4px; margin-left: auto; }
.flip { transform: rotate(180deg); }

.body { flex: 1; min-height: 0; display: flex; }
.work { position: relative; flex: 1; min-width: 0; display: flex; flex-direction: column; }
.tabs { display: flex; height: 17px; flex: none; padding-left: 1px; border-bottom: 1px solid #eee; }
.tab { min-width: 75px; padding: 0 8px 0 5px; justify-content: flex-start; gap: 6px; border-right: 1px solid #e6e6e6; }
.roomy { padding: 0 9px 0 6px; gap: 7px; }
.docicon { width: 9px; height: 9px; stroke: none; }
.dot { width: 6px; height: 6px; margin-left: auto; border-radius: 50%; background: #444; }
.current { background: #d2d1d2; }
.canvas-row { flex: 1; min-height: 0; display: flex; }
.canvas { flex: 1; min-width: 0; height: 100%; overflow: hidden; }
.vscroll { width: 6px; flex: none; background: #f4f4f4; display: flex; flex-direction: column; padding-top: 109px; }
.vthumb { flex: 0 0 47%; border-radius: 2px; background: #c9c8ca; }
.hscroll { height: 7px; flex: none; display: flex; background: #f3f3f3; padding: 1px 0 0 192px; }
.hthumb { width: 74%; border-radius: 2px; background: #c9c8ca; }
.pointer { position: absolute; left: 454px; top: 12px; width: 10px; height: 15px; }

.edges { stroke: #444; stroke-width: 2; }
.edges .thin { stroke-width: 1; }
.leaf-rings { fill: #fff; fill-opacity: .7; stroke: #e9e6e9; stroke-width: 1; }
.core { fill: #36444e; stroke: none; }
.main-rings { fill: #fff; stroke: #404448; stroke-width: 2; }
.molecule { fill: #fff; stroke: none; }
.molecule path { stroke: #fff; stroke-width: 4; }
.canvas text { stroke: none; fill: #333; text-anchor: middle; }
.canvas .core-text { font-size: 15px; font-weight: 700; fill: #fff; }
.main-text { font-size: 12px; font-weight: 700; }
.leaf-text { font-size: 8px; }
.watermark { fill: #787878; fill-opacity: .4; stroke: none; }
.canvas .watermark text { text-anchor: start; fill: #787878; font-family: "Liberation Sans", "Noto Sans CJK SC", sans-serif; font-weight: 700; }
.wm-large { font-size: 52px; }
.wm-small { font-size: 29px; }

.panel { width: 201px; flex: none; display: flex; flex-direction: column; color: #333; }
.panel-head { display: flex; align-items: center; justify-content: space-between; height: 19px; padding: 0 6px 0 5px; }
.panel-head h2 { font-size: 10px; }
.panel-body { flex: 1; display: flex; }
.rail { display: flex; flex-direction: column; gap: 12px; width: 23px; flex: none; padding: 8px 0 0 1px; border-right: 1px solid #e6e4e6; }
.rail button { width: 21px; height: 21px; }
.active { background: #d5d4d5; }
.picon { width: 14px; height: 14px; stroke-width: 1.5; }
.props { flex: 1; min-width: 0; padding: 9px 14px 0 4px; }
.options { display: grid; grid-template-columns: repeat(4, 40px); padding-left: 12px; height: 22px; margin-right: -12px; }
.options button { justify-content: flex-start; gap: 5px; }
.options .dim { color: #888; }
.first { height: 29px; padding-bottom: 6px; margin-right: 0; border-bottom: 1px dashed #ccc; }
.options .font-btn { font-size: 12px; }
.props h3 { font-size: 9px; line-height: 12px; }
.props section { margin-top: 28px; }
.props .first + section { margin-top: 18px; }
.props h3 + div { margin-top: 4px; }
.choices { display: flex; margin-left: 7px; }
.choices button { width: 37px; height: 23px; }
.ruled { border-bottom: 1px solid #eee; }
.rainbow { width: 13px; height: 13px; stroke: none; }

.status { display: flex; align-items: center; height: 23px; flex: none; border-top: 1px solid #ddd; color: #444; }
.outline-btn { width: 34px; height: 14px; }
.page-select { display: flex; align-items: center; width: 73px; height: 14px; padding: 0 4px 0 3px; border: solid #e3d8e3; border-width: 0 1px; }
.page-select select { flex: 1; appearance: none; border: 0; padding: 0; background: none; font: inherit; color: inherit; }
.add { width: 29px; height: 14px; border-right: 1px solid #e3d8e3; }
.page-tab { width: 53px; height: 14px; border-right: 1px solid #e3d8e3; color: #0a9a74; font-weight: 700; }
.count { margin-left: auto; }
.count b { margin-left: 10px; font-weight: 400; }
.view-btns { display: flex; gap: 13px; margin-left: 28px; }
.zoom { display: flex; align-items: center; gap: 5px; margin-left: 12px; }
.zicon { width: 8px; height: 8px; stroke-width: 1; }
.zoom input { width: 60px; height: 10px; margin: 0; appearance: none; background: linear-gradient(#888, #888) center / 100% 1px no-repeat; }
.zoom input::-webkit-slider-thumb { appearance: none; width: 5px; height: 9px; border: 1px solid #777; background: #fff; }
.percent { gap: 5px; margin-left: 8px; }
.percent + .view-btns { margin-left: 12px; }
.grip { width: 8px; height: 8px; margin: 12px 1px 0 16px; fill: #888; stroke: none; }
```
